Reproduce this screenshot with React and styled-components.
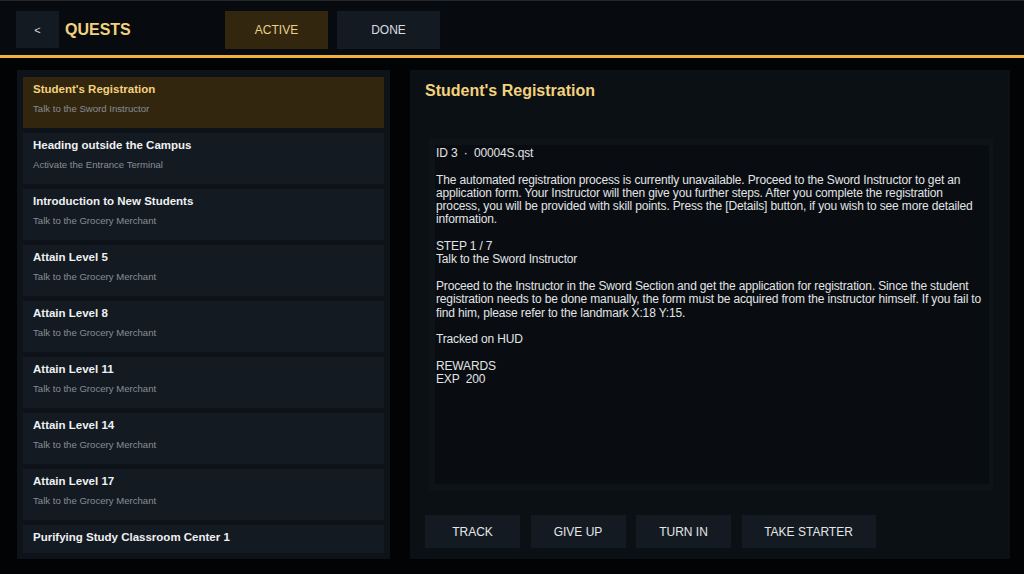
import React from 'react';
import styled, { createGlobalStyle } from 'styled-components';

const Colors = {
  page: '#020304',
  header: '#070b0f',
  accent: '#f2b13a',
  gold: '#f3d27e',
  panelLeft: '#0d1318',
  panelRight: '#0b1014',
  item: '#141a21',
  itemActive: '#33260f',
  text: '#e6e8ea',
  muted: '#868d96',
};

const GlobalStyle = createGlobalStyle`
  html, body {
    margin: 0;
    padding: 0;
    background: ${Colors.page};
  }
  body {
    font-family: 'Liberation Sans', Arial, sans-serif;
    color: ${Colors.text};
  }
  * {
    box-sizing: border-box;
  }
`;

const Screen = styled.div`
  width: 1024px;
  height: 574px;
  display: flex;
  flex-direction: column;
  border-top: 1px solid #25272a;
  background: ${Colors.page};
  overflow: hidden;
`;

const TopBar = styled.header`
  height: 57px;
  display: flex;
  align-items: flex-start;
  padding: 10px 16px 0;
  background: ${Colors.header};
  border-bottom: 3px solid ${Colors.accent};
  flex-shrink: 0;
`;

const BackButton = styled.button`
  width: 43px;
  height: 37px;
  border: none;
  background: ${Colors.item};
  color: #d6dbe0;
  font-family: inherit;
  font-size: 11px;
  padding: 0;
`;

const Title = styled.h1`
  margin: 0 0 0 6px;
  width: 160px;
  height: 37px;
  line-height: 38px;
  font-size: 16px;
  font-weight: bold;
  color: ${Colors.gold};
`;

const Tabs = styled.div`
  display: flex;
  gap: 9px;
`;

const Tab = styled.button`
  width: 103px;
  height: 38px;
  border: none;
  padding: 0;
  font-family: inherit;
  font-size: 12px;
  background: ${(p) => (p.$active ? Colors.itemActive : Colors.item)};
  color: ${(p) => (p.$active ? '#ead08c' : '#d8dde2')};
`;

const Body = styled.main`
  flex: 1;
  display: flex;
  gap: 20px;
  padding: 12px 14px 15px 17px;
  min-height: 0;
`;

const ListPanel = styled.aside`
  width: 373px;
  background: ${Colors.panelLeft};
  padding: 7px 6px 6px;
  display: flex;
  flex-direction: column;
`;

const QuestList = styled.ul`
  list-style: none;
  margin: 0;
  padding: 0;
  flex: 1;
  overflow: hidden;
  display: flex;
  flex-direction: column;
  gap: 5px;
`;

const QuestItem = styled.li`
  flex-shrink: 0;
  height: 51px;
  padding: 5px 10px 0;
  background: ${(p) => (p.$active ? Colors.itemActive : Colors.item)};
`;

const QuestName = styled.div`
  font-size: 11.5px;
  font-weight: bold;
  line-height: 14px;
  color: ${(p) => (p.$active ? Colors.gold : '#eef0f2')};
`;

const QuestHint = styled.div`
  margin-top: 7px;
  font-size: 9.6px;
  line-height: 12px;
  color: ${Colors.muted};
`;

const DetailPanel = styled.section`
  flex: 1;
  background: ${Colors.panelRight};
  padding: 12px 17px 11px 15px;
  display: flex;
  flex-direction: column;
`;

const DetailTitle = styled.h2`
  margin: 0;
  font-size: 16px;
  line-height: 18px;
  font-weight: bold;
  color: ${Colors.gold};
`;

const DescFrame = styled.div`
  margin: 38px 0 0 4px;
  height: 353px;
  padding: 7px 4px 7px 6px;
  background: #0d1317;
  display: flex;
`;

const DescText = styled.div`
  flex: 1;
  background: #090d11;
  padding: 2px 0 0 1px;
  font-size: 12px;
  line-height: 13.3px;
  color: #e2e4e6;
  white-space: pre-wrap;
  letter-spacing: -0.15px;
`;

const Actions = styled.div`
  margin-top: auto;
  display: flex;
  gap: 10.5px;
`;

const ActionButton = styled.button`
  width: ${(p) => p.$width || 95}px;
  height: 33px;
  border: none;
  padding: 0;
  background: ${Colors.item};
  color: #e4e7ea;
  font-family: inherit;
  font-size: 12px;
`;

// the last entry sits under the list's lower edge, so only its name shows
const quests = [
  { name: "Student's Registration", hint: 'Talk to the Sword Instructor' },
  { name: 'Heading outside the Campus', hint: 'Activate the Entrance Terminal' },
  { name: 'Introduction to New Students', hint: 'Talk to the Grocery Merchant' },
  { name: 'Attain Level 5', hint: 'Talk to the Grocery Merchant' },
  { name: 'Attain Level 8', hint: 'Talk to the Grocery Merchant' },
  { name: 'Attain Level 11', hint: 'Talk to the Grocery Merchant' },
  { name: 'Attain Level 14', hint: 'Talk to the Grocery Merchant' },
  { name: 'Attain Level 17', hint: 'Talk to the Grocery Merchant' },
  { name: 'Purifying Study Classroom Center 1' },
];

const description = `ID 3  \u00b7  00004S.qst

The automated registration process is currently unavailable. Proceed to the Sword Instructor to get an application form. Your Instructor will then give you further steps. After you complete the registration process, you will be provided with skill points. Press the [Details] button, if you wish to see more detailed information.

STEP 1 / 7
Talk to the Sword Instructor

Proceed to the Instructor in the Sword Section and get the application for registration. Since the student registration needs to be done manually, the form must be acquired from the instructor himself. If you fail to find him, please refer to the landmark X:18 Y:15.

Tracked on HUD

REWARDS
EXP  200`;

const App = () => {
  return (
    <>
      <GlobalStyle />
      <Screen>
        <TopBar>
          <BackButton>&lt;</BackButton>
          <Title>QUESTS</Title>
          <Tabs>
            <Tab $active>ACTIVE</Tab>
            <Tab>DONE</Tab>
          </Tabs>
        </TopBar>
        <Body>
          <ListPanel>
            <QuestList>
              {quests.map((q, i) => (
                <QuestItem key={q.name} $active={i === 0}>
                  <QuestName $active={i === 0}>{q.name}</QuestName>
                  {q.hint && <QuestHint>{q.hint}</QuestHint>}
                </QuestItem>
              ))}
            </QuestList>
          </ListPanel>
          <DetailPanel>
            <DetailTitle>Student's Registration</DetailTitle>
            <DescFrame>
              <DescText>{description}</DescText>
            </DescFrame>
            <Actions>
              <ActionButton>TRACK</ActionButton>
              <ActionButton>GIVE UP</ActionButton>
              <ActionButton>TURN IN</ActionButton>
              <ActionButton $width={134}>TAKE STARTER</ActionButton>
            </Actions>
          </DetailPanel>
        </Body>
      </Screen>
    </>
  );
};

export default App;
